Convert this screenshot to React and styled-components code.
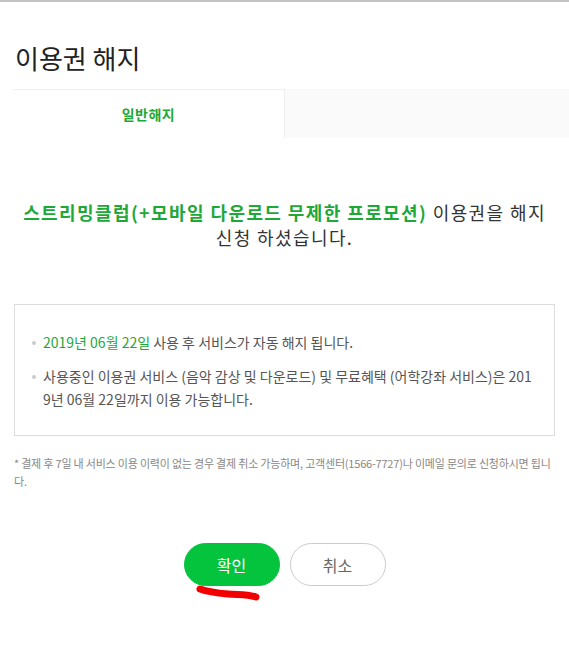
import React from 'react';
import styled, { createGlobalStyle } from 'styled-components';

const GlobalStyle = createGlobalStyle`
  body {
    margin: 0;
    background: #fff;
    font-family: 'Noto Sans CJK KR', 'Noto Sans', sans-serif;
    color: #333;
  }
`;

const Page = styled.div`
  border-top: 2px solid #c4c4c4;
  min-height: 645px;
`;

const Title = styled.h1`
  margin: 0;
  padding: 38px 0 0 15px;
  height: 49px;
  font-size: 26px;
  font-weight: 400;
  line-height: 36px;
  color: #222;
`;

const Tabs = styled.div`
  display: flex;
  margin-left: 13px;
  height: 49px;
`;

const Tab = styled.div`
  width: 271px;
  display: flex;
  align-items: center;
  justify-content: center;
  font-size: 14px;
  font-weight: 700;
  letter-spacing: 0.5px;
  color: #1ea838;
  background: ${(p) => (p.active ? '#fff' : '#fafafa')};
  border-top: 1px solid ${(p) => (p.active ? '#eee' : '#fafafa')};
  border-right: ${(p) => (p.active ? '1px solid #eee' : 'none')};
  flex: ${(p) => (p.active ? 'none' : '1')};
`;

const Content = styled.div`
  width: 541px;
  margin-left: 14px;
`;

const Message = styled.p`
  margin: 62px 0 0;
  text-align: center;
  font-size: 18px;
  line-height: 25px;
  letter-spacing: 1.4px;
  color: #333;
`;

const Strong = styled.strong`
  color: #1ea838;
  font-weight: 700;
`;

const InfoBox = styled.ul`
  margin: 54px 0 0;
  list-style: none;
  border: 1px solid #ddd;
  padding: 26px 20px 24px 28px;
`;

const Item = styled.li`
  position: relative;
  font-size: 14px;
  line-height: 23px;
  color: #555;
  margin-bottom: 11px;
  word-break: break-all;

  &:last-child {
    margin-bottom: 0;
  }

  &::before {
    content: '';
    position: absolute;
    left: -11px;
    top: 10px;
    width: 4px;
    height: 4px;
    border-radius: 50%;
    background: #ccc;
  }
`;

const Green = styled.span`
  color: #1ea838;
`;

const Note = styled.p`
  margin: 18px 0 0;
  font-size: 11px;
  line-height: 18px;
  letter-spacing: -0.2px;
  color: #888;
  word-break: break-all;
`;

const Buttons = styled.div`
  display: flex;
  justify-content: center;
  gap: 10px;
  margin-top: 53px;
  position: relative;
`;

const Button = styled.button`
  width: 96px;
  height: 43px;
  border-radius: 22px;
  font-family: inherit;
  font-size: 16px;
  cursor: pointer;
  background: ${(p) => (p.primary ? '#04c33d' : '#fff')};
  color: ${(p) => (p.primary ? '#fff' : '#666')};
  border: 1px solid ${(p) => (p.primary ? '#04c33d' : '#ccc')};
`;

const Scribble = styled.svg`
  position: absolute;
  left: 180px;
  top: 41px;
  pointer-events: none;
`;

export default function App() {
  return (
    <>
      <GlobalStyle />
      <Page>
        <Title>이용권 해지</Title>
        <Tabs>
          <Tab active>일반해지</Tab>
          <Tab />
        </Tabs>
        <Content>
          <Message>
            <Strong>스트리밍클럽(+모바일 다운로드 무제한 프로모션)</Strong> 이용권을 해지
            <br />
            신청 하셨습니다.
          </Message>
          <InfoBox>
            <Item>
              <Green>2019년 06월 22일</Green> 사용 후 서비스가 자동 해지 됩니다.
            </Item>
            <Item>
              사용중인 이용권 서비스 (음악 감상 및 다운로드) 및 무료혜택 (어학강좌 서비스)은 2019년 06월 22일까지 이용 가능합니다.
            </Item>
          </InfoBox>
          <Note>
            * 결제 후 7일 내 서비스 이용 이력이 없는 경우 결제 취소 가능하며, 고객센터(1566-7727)나 이메일 문의로 신청하시면 됩니다.
          </Note>
          <Buttons>
            <Button primary>확인</Button>
            <Button>취소</Button>
            <Scribble width="70" height="20" viewBox="0 0 70 20">
              <path
                d="M6 5 C 14 8, 22 9, 34 10 C 44 11, 52 10, 62 13"
                stroke="#f20000"
                strokeWidth="7"
                strokeLinecap="round"
                fill="none"
              />
            </Scribble>
          </Buttons>
        </Content>
      </Page>
    </>
  );
}
